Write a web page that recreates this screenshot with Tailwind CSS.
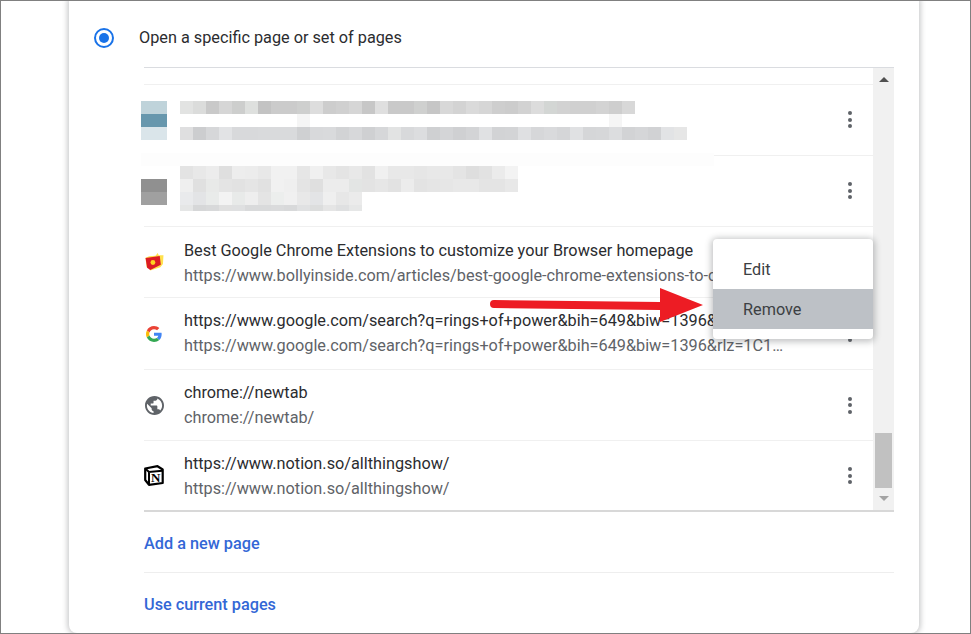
<!DOCTYPE html>
<html lang="en">
<head>
<meta charset="utf-8">
<title>On startup</title>
<script src="https://cdn.jsdelivr.net/npm/@tailwindcss/browser@4"></script>
</head>
<body class="bg-white">
<div class="relative w-[971px] h-[634px] overflow-hidden border border-[#808080] bg-white font-['Roboto',sans-serif] text-[16.25px] text-[#2b2c2f]">
  <div class="ml-[68px] w-[850px] h-[632px] rounded-b-lg bg-white shadow-[0_0_5px_2px_rgba(60,64,67,0.25)] overflow-hidden">
    <div class="h-[66px] flex items-center pt-[7px]">
      <div class="ml-[25px] w-5 h-5 rounded-full border-2 border-[#1a73e8] flex items-center justify-center">
        <div class="w-[10px] h-[10px] rounded-full bg-[#1a73e8]"></div>
      </div>
      <span class="ml-[25px] mt-[2px]">Open a specific page or set of pages</span>
    </div>

    <div class="ml-[75px] w-[750px] h-[445px] border-t border-b-2 border-t-[#dadce0] border-b-[#d8d8d8] flex">
      <div class="w-[729px] flex flex-col">
        <div class="h-[17px] shrink-0 border-b border-[#f0f0f0]"></div>

        <div class="relative h-[71px] shrink-0 border-b border-[#f0f0f0] flex justify-between">
          <div class="-ml-[3px] pt-[16px] flex gap-[13px]">
            <div class="w-[26px] h-[39px] flex flex-col">
              <div class="h-[13px] bg-[#bfd3da]"></div>
              <div class="h-[13px] bg-[#6797ad]"></div>
              <div class="h-[13px] bg-[#dae5ea]"></div>
            </div>
            <div class="flex flex-col">
              <div class="flex h-[13px]">
                <i class="block w-[13px] bg-[#e2e3e2]"></i><i class="block w-[13px] bg-[#dbdcdb]"></i><i class="block w-[13px] bg-[#c9c9c9]"></i><i class="block w-[13px] bg-[#d6d6d6]"></i><i class="block w-[13px] bg-[#cdcecd]"></i><i class="block w-[13px] bg-[#dee0de]"></i><i class="block w-[13px] bg-[#c3c3c3]"></i><i class="block w-[13px] bg-[#cbcbcb]"></i><i class="block w-[13px] bg-[#cbcbcb]"></i><i class="block w-[13px] bg-[#cecfce]"></i><i class="block w-[13px] bg-[#dddddd]"></i><i class="block w-[13px] bg-[#cdcdcd]"></i><i class="block w-[13px] bg-[#d0d0d0]"></i><i class="block w-[13px] bg-[#d6d6d6]"></i><i class="block w-[13px] bg-[#c7c7c7]"></i><i class="block w-[13px] bg-[#dfdfdf]"></i><i class="block w-[13px] bg-[#c9c9c9]"></i><i class="block w-[13px] bg-[#c9c9c9]"></i><i class="block w-[13px] bg-[#cfd0cf]"></i><i class="block w-[13px] bg-[#c6c6c6]"></i><i class="block w-[13px] bg-[#d8d8d8]"></i><i class="block w-[13px] bg-[#d3d3d3]"></i><i class="block w-[13px] bg-[#dadada]"></i><i class="block w-[13px] bg-[#d6d6d6]"></i><i class="block w-[13px] bg-[#cecece]"></i><i class="block w-[13px] bg-[#cccccc]"></i><i class="block w-[13px] bg-[#d2d2d2]"></i><i class="block w-[13px] bg-[#dcdcdc]"></i><i class="block w-[13px] bg-[#d3d6d4]"></i><i class="block w-[13px] bg-[#d2d2d2]"></i><i class="block w-[13px] bg-[#d0d0d0]"></i><i class="block w-[13px] bg-[#d0d0d0]"></i><i class="block w-[13px] bg-[#d3d3d3]"></i><i class="block w-[13px] bg-[#cecece]"></i><i class="block w-[13px] bg-[#d8d8d8]"></i>
              </div>
              <div class="flex h-[13px]">
                <i class="block w-[117px]"></i><i class="block w-[13px] bg-[#f5f5f5]"></i><i class="block w-[299px]"></i><i class="block w-[13px] bg-[#f5f5f5]"></i>
              </div>
              <div class="flex h-[13px]">
                <i class="block w-[13px] bg-[#dfdfe0]"></i><i class="block w-[13px] bg-[#cccdcf]"></i><i class="block w-[13px] bg-[#d6d7d9]"></i><i class="block w-[13px] bg-[#e2e3e5]"></i><i class="block w-[13px] bg-[#d8d9db]"></i><i class="block w-[13px] bg-[#d8d9db]"></i><i class="block w-[13px] bg-[#d9dadc]"></i><i class="block w-[13px] bg-[#d9dadc]"></i><i class="block w-[13px] bg-[#d9dadc]"></i><i class="block w-[13px] bg-[#cfd0d2]"></i><i class="block w-[13px] bg-[#d8d9db]"></i><i class="block w-[13px] bg-[#d9dadc]"></i><i class="block w-[13px] bg-[#d2d3d5]"></i><i class="block w-[13px] bg-[#d7d8da]"></i><i class="block w-[13px] bg-[#cfd0d2]"></i><i class="block w-[13px] bg-[#d6d7d9]"></i><i class="block w-[13px] bg-[#e2e3e3]"></i><i class="block w-[13px] bg-[#d8d9db]"></i><i class="block w-[13px] bg-[#dcdddf]"></i><i class="block w-[13px] bg-[#cfd0d2]"></i><i class="block w-[13px] bg-[#d4d5d7]"></i><i class="block w-[13px] bg-[#cfd0d2]"></i><i class="block w-[13px] bg-[#d3d4d6]"></i><i class="block w-[13px] bg-[#e0e1e3]"></i><i class="block w-[13px] bg-[#d2d3d5]"></i><i class="block w-[13px] bg-[#d3d4d6]"></i><i class="block w-[13px] bg-[#dfe0e2]"></i><i class="block w-[13px] bg-[#d6d7d9]"></i><i class="block w-[13px] bg-[#d9dadc]"></i><i class="block w-[13px] bg-[#d5d6d8]"></i><i class="block w-[13px] bg-[#e0e1e3]"></i><i class="block w-[13px] bg-[#d5d6d8]"></i><i class="block w-[13px] bg-[#d6d7d9]"></i><i class="block w-[13px] bg-[#dcdddf]"></i><i class="block w-[13px] bg-[#d2d3d5]"></i><i class="block w-[13px] bg-[#d5d6d8]"></i><i class="block w-[13px] bg-[#d1d2d4]"></i><i class="block w-[13px] bg-[#e2e3e5]"></i><i class="block w-[13px] bg-[#e6e6e6]"></i>
              </div>
            </div>
          </div>
          <div class="mr-[21px] mt-[26px] w-1 flex flex-col gap-[2.500px]">
            <i class="block size-[4px] rounded-full bg-[#5f6368]"></i><i class="block size-[4px] rounded-full bg-[#5f6368]"></i><i class="block size-[4px] rounded-full bg-[#5f6368]"></i>
          </div>
        </div>

        <div class="relative h-[71px] shrink-0 border-b border-[#f0f0f0] flex justify-between">
          <div class="-ml-[3px] pt-[10px] flex gap-[13px]">
            <div class="w-[26px] h-[26px] mt-[13px] flex flex-col">
              <div class="h-[13px] bg-[#909090]"></div>
              <div class="h-[13px] bg-[#a0a0a0]"></div>
            </div>
            <div class="flex flex-col">
              <div class="flex h-[13px]">
                <i class="block w-[13px] bg-[#e3e3e3]"></i><i class="block w-[13px] bg-[#e8e8e8]"></i><i class="block w-[13px] bg-[#ececec]"></i><i class="block w-[13px] bg-[#dfdfdf]"></i><i class="block w-[13px] bg-[#ededed]"></i><i class="block w-[13px] bg-[#ececec]"></i><i class="block w-[13px] bg-[#e8e8e8]"></i><i class="block w-[13px] bg-[#f1f1f1]"></i><i class="block w-[13px] bg-[#f1f1f1]"></i><i class="block w-[13px] bg-[#e6e6e6]"></i><i class="block w-[13px] bg-[#f0f0f0]"></i><i class="block w-[13px] bg-[#e8e8e8]"></i><i class="block w-[13px] bg-[#e4e4e4]"></i><i class="block w-[13px] bg-[#e8e8e8]"></i><i class="block w-[13px] bg-[#e2e2e2]"></i><i class="block w-[13px] bg-[#f0f0f0]"></i><i class="block w-[13px] bg-[#e8e8e8]"></i><i class="block w-[13px] bg-[#e8e8e8]"></i><i class="block w-[13px] bg-[#e6e6e6]"></i><i class="block w-[13px] bg-[#e8e8e8]"></i><i class="block w-[13px] bg-[#e8e8e8]"></i><i class="block w-[13px] bg-[#e4e4e4]"></i><i class="block w-[13px] bg-[#dedede]"></i><i class="block w-[13px] bg-[#e2e2e2]"></i><i class="block w-[13px] bg-[#ebebeb]"></i><i class="block w-[13px] bg-[#f3f3f3]"></i>
              </div>
              <div class="flex h-[13px]">
                <i class="block w-[13px] bg-[#efefef]"></i><i class="block w-[13px] bg-[#e0e0e0]"></i><i class="block w-[13px] bg-[#e8e9e8]"></i><i class="block w-[13px] bg-[#e4e4e4]"></i><i class="block w-[13px] bg-[#e2e2e2]"></i><i class="block w-[13px] bg-[#e5e5e5]"></i><i class="block w-[13px] bg-[#e1e1e1]"></i><i class="block w-[13px] bg-[#f1f1f1]"></i><i class="block w-[13px] bg-[#efefef]"></i><i class="block w-[13px] bg-[#e4e4e4]"></i><i class="block w-[13px] bg-[#dfdfdf]"></i><i class="block w-[13px] bg-[#ececec]"></i><i class="block w-[13px] bg-[#ececec]"></i><i class="block w-[13px] bg-[#e3e5e4]"></i><i class="block w-[13px] bg-[#e3e3e3]"></i><i class="block w-[13px] bg-[#e6e6e6]"></i><i class="block w-[13px] bg-[#e2e2e2]"></i><i class="block w-[13px] bg-[#ececec]"></i><i class="block w-[13px] bg-[#e3e3e3]"></i><i class="block w-[13px] bg-[#e5e5e5]"></i><i class="block w-[13px] bg-[#e6e6e6]"></i><i class="block w-[13px] bg-[#e8e8e8]"></i><i class="block w-[13px] bg-[#e8e8e8]"></i><i class="block w-[13px] bg-[#e4e4e4]"></i><i class="block w-[13px] bg-[#e4e4e4]"></i><i class="block w-[13px] bg-[#e8e8e8]"></i>
              </div>
              <div class="flex h-[13px]">
                <i class="block w-[13px] bg-[#e9eaec]"></i><i class="block w-[13px] bg-[#e3e4e6]"></i><i class="block w-[13px] bg-[#e9ebea]"></i><i class="block w-[13px] bg-[#f3f3f3]"></i><i class="block w-[13px] bg-[#e8eae9]"></i><i class="block w-[13px] bg-[#eeeeee]"></i><i class="block w-[13px] bg-[#e4e4e4]"></i><i class="block w-[13px] bg-[#eceeed]"></i><i class="block w-[13px] bg-[#f0f0f0]"></i><i class="block w-[13px] bg-[#e8e8e8]"></i><i class="block w-[13px] bg-[#e3e4e6]"></i><i class="block w-[13px] bg-[#efefef]"></i><i class="block w-[13px] bg-[#e7e7e7]"></i><i class="block w-[13px] bg-[#ebebeb]"></i>
              </div>
              <div class="flex h-[6px]">
                <i class="block w-[13px] bg-[#e5e6e6]"></i><i class="block w-[13px] bg-[#d6d7d8]"></i><i class="block w-[13px] bg-[#d8d9da]"></i><i class="block w-[13px] bg-[#e0e0e0]"></i><i class="block w-[13px] bg-[#dfe0e1]"></i><i class="block w-[13px] bg-[#d9dadb]"></i><i class="block w-[13px] bg-[#d9dadb]"></i><i class="block w-[13px] bg-[#dadbdc]"></i><i class="block w-[13px] bg-[#d8d9da]"></i><i class="block w-[13px] bg-[#e0e1e2]"></i><i class="block w-[13px] bg-[#dcdddd]"></i><i class="block w-[13px] bg-[#e5e5e5]"></i><i class="block w-[13px] bg-[#dfe0e1]"></i><i class="block w-[13px] bg-[#e6e7e7]"></i>
              </div>
            </div>
          </div>
          <div class="mr-[21px] mt-[26px] w-1 flex flex-col gap-[2.500px]">
            <i class="block size-[4px] rounded-full bg-[#5f6368]"></i><i class="block size-[4px] rounded-full bg-[#5f6368]"></i><i class="block size-[4px] rounded-full bg-[#5f6368]"></i>
          </div>
          <div class="absolute left-[-3px] right-[159px] -top-[3px] h-[13px] bg-[#fdfdfd]"></div>
        </div>

        <div class="h-[71px] shrink-0 border-b border-[#f0f0f0] flex items-center">
          <div class="w-10 shrink-0">
            <svg class="ml-px" width="19" height="20" viewBox="0 0 18 18"><path d="M4 3.500 L10 3 L12 .5 L13 2.500 L17.500 2.500 L17 11 L14.500 14 L5 17 L4 15 L1.500 14 L.5 5 Z" fill="#ffe14d"/><path d="M.5 5.200 L14 3.300 L15 11.500 L5 16.500 L2 14.500 Z" fill="#dc1b24"/><circle cx="7.500" cy="9.500" r="2.300" fill="#ffd21f"/></svg>
          </div>
          <div class="min-w-0 w-[600px] pt-px leading-[25px]">
            <div class="whitespace-nowrap">Best Google Chrome Extensions to customize your Browser homepage</div>
            <div class="whitespace-nowrap overflow-hidden text-[#5f6368]">https://www.bollyinside.com/articles/best-google-chrome-extensions-to-customize</div>
          </div>
        </div>

        <div class="h-[72px] shrink-0 border-b border-[#f0f0f0] flex items-center">
          <div class="w-10 shrink-0">
            <svg class="ml-[2px]" width="16" height="16" viewBox="0 0 48 48"><path fill="#EA4335" d="M24 9.500c3.500 0 6.700 1.200 9.200 3.600l6.900-6.900C35.900 2.400 30.500 0 24 0 14.600 0 6.500 5.400 2.600 13.200l8 6.200C12.400 13.700 17.700 9.500 24 9.500z"/><path fill="#4285F4" d="M46.980 24.550c0-1.570-.15-3.090-.38-4.550H24v9.020h12.940c-.58 2.960-2.260 5.480-4.780 7.180l7.730 6c4.510-4.180 7.090-10.360 7.090-17.650z"/><path fill="#FBBC05" d="M10.530 28.590c-.48-1.450-.76-2.990-.76-4.590s.27-3.140.76-4.590l-7.980-6.190C.92 16.460 0 20.120 0 24c0 3.880.92 7.540 2.560 10.780l7.970-6.190z"/><path fill="#34A853" d="M24 48c6.480 0 11.930-2.130 15.890-5.810l-7.730-6c-2.150 1.450-4.920 2.300-8.160 2.300-6.260 0-11.570-4.220-13.470-9.910l-7.980 6.190C6.510 42.620 14.620 48 24 48z"/></svg>
          </div>
          <div class="min-w-0 w-[602px] pb-[2px] leading-[25px]">
            <div class="truncate">https://www.google.com/search?q=rings+of+power&amp;bih=649&amp;biw=1396&amp;rlz=1C1CHBF_enIN1000IN1000</div>
            <div class="truncate text-[#5f6368]">https://www.google.com/search?q=rings+of+power&amp;bih=649&amp;biw=1396&amp;rlz=1C1CHBF_enIN1000IN1000</div>
          </div>
          <div class="ml-auto mr-[21px] w-1 flex flex-col gap-[2.500px]">
            <i class="block size-[4px] rounded-full bg-[#5f6368]"></i><i class="block size-[4px] rounded-full bg-[#5f6368]"></i><i class="block size-[4px] rounded-full bg-[#5f6368]"></i>
          </div>
        </div>

        <div class="h-[71px] shrink-0 border-b border-[#f0f0f0] flex items-center">
          <div class="w-10 shrink-0">
            <svg class="ml-px" width="19" height="19" viewBox="2 2 20 20"><path fill="#5f6368" d="M12 2C6.480 2 2 6.480 2 12s4.480 10 10 10 10-4.480 10-10S17.520 2 12 2zm-1 17.930c-3.950-.49-7-3.850-7-7.930 0-.62.08-1.210.21-1.790L9 15v1c0 1.100.9 2 2 2v1.930zm6.900-2.540c-.26-.81-1-1.390-1.900-1.390h-1v-3c0-.55-.45-1-1-1H8v-2h2c.55 0 1-.45 1-1V7h2c1.100 0 2-.9 2-2v-.41c2.930 1.190 5 4.060 5 7.410 0 2.080-.8 3.970-2.100 5.390z"/></svg>
          </div>
          <div class="leading-[25px]">
            <div>chrome://newtab</div>
            <div class="text-[#5f6368]">chrome://newtab/</div>
          </div>
          <div class="ml-auto mr-[21px] w-1 flex flex-col gap-[2.500px]">
            <i class="block size-[4px] rounded-full bg-[#5f6368]"></i><i class="block size-[4px] rounded-full bg-[#5f6368]"></i><i class="block size-[4px] rounded-full bg-[#5f6368]"></i>
          </div>
        </div>

        <div class="flex-1 flex items-center">
          <div class="w-10 shrink-0">
            <svg width="20" height="21" viewBox="0 0 20 21"><path d="M1.200 3.500 L13.500 1.200 L18.700 4.500 L18.700 18 L5 19.800 L1.200 15 Z" fill="#fff" stroke="#000" stroke-width="2.200" stroke-linejoin="round"/><path d="M1.500 3.800 L5 7 L18.300 5.800 M5 7 L5 19.500" fill="none" stroke="#000" stroke-width="2"/><text x="11.800" y="17" text-anchor="middle" font-family="Liberation Serif" font-weight="700" font-size="13" fill="#000">N</text></svg>
          </div>
          <div class="leading-[25px]">
            <div>https://www.notion.so/allthingshow/</div>
            <div class="text-[#5f6368]">https://www.notion.so/allthingshow/</div>
          </div>
          <div class="ml-auto mr-[21px] w-1 flex flex-col gap-[2.500px]">
            <i class="block size-[4px] rounded-full bg-[#5f6368]"></i><i class="block size-[4px] rounded-full bg-[#5f6368]"></i><i class="block size-[4px] rounded-full bg-[#5f6368]"></i>
          </div>
        </div>
      </div>

      <div class="w-[21px] bg-[#f1f1f1] flex flex-col items-center">
        <div class="mt-[9px] w-0 h-0 border-x-[5px] border-x-transparent border-b-[5px] border-b-[#505050]"></div>
        <div class="mt-auto w-[17px] h-[55px] bg-[#c1c1c1]"></div>
        <div class="mt-[8px] mb-[9px] w-0 h-0 border-x-[5px] border-x-transparent border-t-[5px] border-t-[#a3a3a3]"></div>
      </div>
    </div>

    <div class="ml-[75px] w-[750px]">
      <div class="h-[61px] pt-[4px] flex items-center border-b border-[#eeeeee] font-medium text-[#3367d6]">Add a new page</div>
      <div class="h-[61px] pt-[4px] flex items-center font-medium text-[#3367d6]">Use current pages</div>
    </div>
  </div>

  <div class="absolute left-[712px] top-[238px] w-[160px] h-[100px] py-[10px] bg-white rounded-[4px] shadow-[0_1px_6px_2px_rgba(60,64,67,0.3)] text-[#3c4043]">
    <div class="h-10 pl-[30px] pt-[3px] flex items-center">Edit</div>
    <div class="h-10 pl-[30px] pt-[3px] flex items-center bg-[#bdc1c6]">Remove</div>
  </div>

  <svg class="absolute left-[487px] top-[285px]" width="216" height="38" viewBox="487 285 216 38"><path d="M493 299 L659 301 L659 287 L702 304 L659 321 L659 309 L493 307 A4 4 0 0 1 493 299 Z" fill="#ed1c24"/></svg>
</div>
</body>
</html>
